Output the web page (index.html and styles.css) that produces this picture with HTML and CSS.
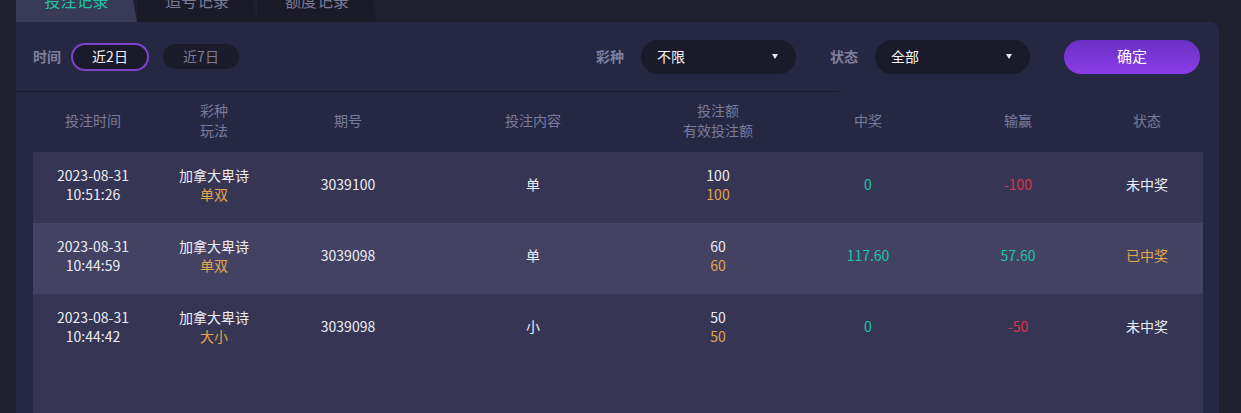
FILE: index.html
```html
<!DOCTYPE html>
<html lang="zh">
<head>
<meta charset="utf-8">
<title>投注记录</title>
<link rel="stylesheet" href="styles.css">
</head>
<body>
<div class="page">
  <div class="tabs">
    <div class="tab active">投注记录</div>
    <div class="tab">追号记录</div>
    <div class="tab">额度记录</div>
  </div>
  <div class="panel">
    <div class="filters">
      <div class="group">
        <span class="label">时间</span>
        <span class="pill selected">近2日</span>
        <span class="pill">近7日</span>
      </div>
      <div class="group right">
        <span class="label">彩种</span>
        <div class="select"><span>不限</span><i class="caret"></i></div>
        <span class="label gap">状态</span>
        <div class="select"><span>全部</span><i class="caret"></i></div>
        <button class="confirm">确定</button>
      </div>
    </div>
    <div class="divider"></div>
    <div class="table">
      <div class="thead row-grid">
        <div>投注时间</div>
        <div>彩种<br>玩法</div>
        <div>期号</div>
        <div>投注内容</div>
        <div>投注额<br>有效投注额</div>
        <div>中奖</div>
        <div>输赢</div>
        <div>状态</div>
      </div>
      <div class="tbody">
        <div class="tr row-grid">
          <div>2023-08-31<br>10:51:26</div>
          <div>加拿大卑诗<br><span class="orange">单双</span></div>
          <div>3039100</div>
          <div>单</div>
          <div>100<br><span class="orange">100</span></div>
          <div class="teal">0</div>
          <div class="red">-100</div>
          <div>未中奖</div>
        </div>
        <div class="tr row-grid alt">
          <div>2023-08-31<br>10:44:59</div>
          <div>加拿大卑诗<br><span class="orange">单双</span></div>
          <div>3039098</div>
          <div>单</div>
          <div>60<br><span class="orange">60</span></div>
          <div class="teal">117.60</div>
          <div class="teal">57.60</div>
          <div class="orange">已中奖</div>
        </div>
        <div class="tr row-grid">
          <div>2023-08-31<br>10:44:42</div>
          <div>加拿大卑诗<br><span class="orange">大小</span></div>
          <div>3039098</div>
          <div>小</div>
          <div>50<br><span class="orange">50</span></div>
          <div class="teal">0</div>
          <div class="red">-50</div>
          <div>未中奖</div>
        </div>
      </div>
    </div>
  </div>
</div>
</body>
</html>
```

FILE: styles.css
```css
html, body {
  margin: 0;
  padding: 0;
  background: #1f1f30;
  height: 100%;
  overflow: hidden;
}
body {
  font-family: "Noto Sans CJK SC", "Noto Sans", sans-serif;
  font-size: 14px;
  color: #ececf3;
}
.page {
  margin-left: 16px;
  margin-right: 22px;
}
.tabs {
  display: flex;
  height: 44px;
  margin-top: -22px;
}
.tab {
  height: 44px;
  line-height: 44px;
  font-size: 16px;
  text-align: center;
  background: #1a1a29;
  color: #7b7b98;
  clip-path: polygon(0 0, calc(100% - 8px) 0, 100% 100%, 0 100%);
}
.tab:nth-child(1) { width: 121px; }
.tab:nth-child(2) { width: 120px; }
.tab:nth-child(3) { width: 120px; }
.tab.active {
  background: #393a55;
  color: #20c4a4;
}
.panel {
  background: #262843;
  border-top-right-radius: 8px;
  min-height: 400px;
}
.filters {
  box-sizing: border-box;
  height: 69px;
  display: flex;
  align-items: center;
  padding: 0 19px 0 17px;
}
.group {
  display: flex;
  align-items: center;
}
.group.right {
  margin-left: auto;
}
.label {
  color: #7d7f9e;
  font-weight: bold;
  margin-right: 10px;
  padding-bottom: 2px;
}
.group.right .label { margin-right: 17px; }
.label.gap { margin-left: 34px; }
.pill {
  box-sizing: border-box;
  display: inline-flex;
  align-items: center;
  justify-content: center;
  width: 76px;
  height: 25px;
  border-radius: 13px;
  background: #1c1b2c;
  color: #7d7d99;
  margin-right: 14px;
  padding-bottom: 1px;
}
.pill.selected {
  width: 78px;
  height: 28px;
  border: 2px solid #7c43c9;
  border-radius: 14px;
  color: #f2f2f7;
  background: #1b1a2b;
}
.select {
  box-sizing: border-box;
  width: 155px;
  height: 34px;
  border-radius: 17px;
  background: #1b1a2b;
  display: flex;
  align-items: center;
  justify-content: space-between;
  padding: 0 18px 1px 16px;
  color: #f4f4f8;
}
.caret {
  width: 0;
  height: 0;
  border-left: 3.5px solid transparent;
  border-right: 3.5px solid transparent;
  border-top: 5px solid #e8e8ee;
}
.confirm {
  margin-left: 34px;
  width: 136px;
  height: 34px;
  border: 0;
  border-radius: 17px;
  background: linear-gradient(180deg, #6a2fc4 0%, #8b3de8 100%);
  color: #ffffff;
  font-family: inherit;
  font-size: 15px;
  padding: 0 0 3px 0;
}
.divider {
  width: 823px;
  height: 1px;
  background: #1a1a2a;
}
.table {
  padding: 0 16px 0 17px;
}
.row-grid {
  display: grid;
  grid-template-columns: 120px 122px 146px 224px 146px 154px 146px 112px;
  align-items: center;
  text-align: center;
}
.thead {
  box-sizing: border-box;
  height: 60px;
  color: #7a7b9c;
  line-height: 20px;
  padding-bottom: 4px;
}
.tbody {
  background: #363553;
  min-height: 300px;
}
.tr {
  box-sizing: border-box;
  height: 71px;
  line-height: 19px;
  padding-bottom: 6px;
}
.tr.alt {
  background: #444263;
}
.orange { color: #e2a64a; }
.teal { color: #1fc5a6; }
.red { color: #d9344f; }
```
